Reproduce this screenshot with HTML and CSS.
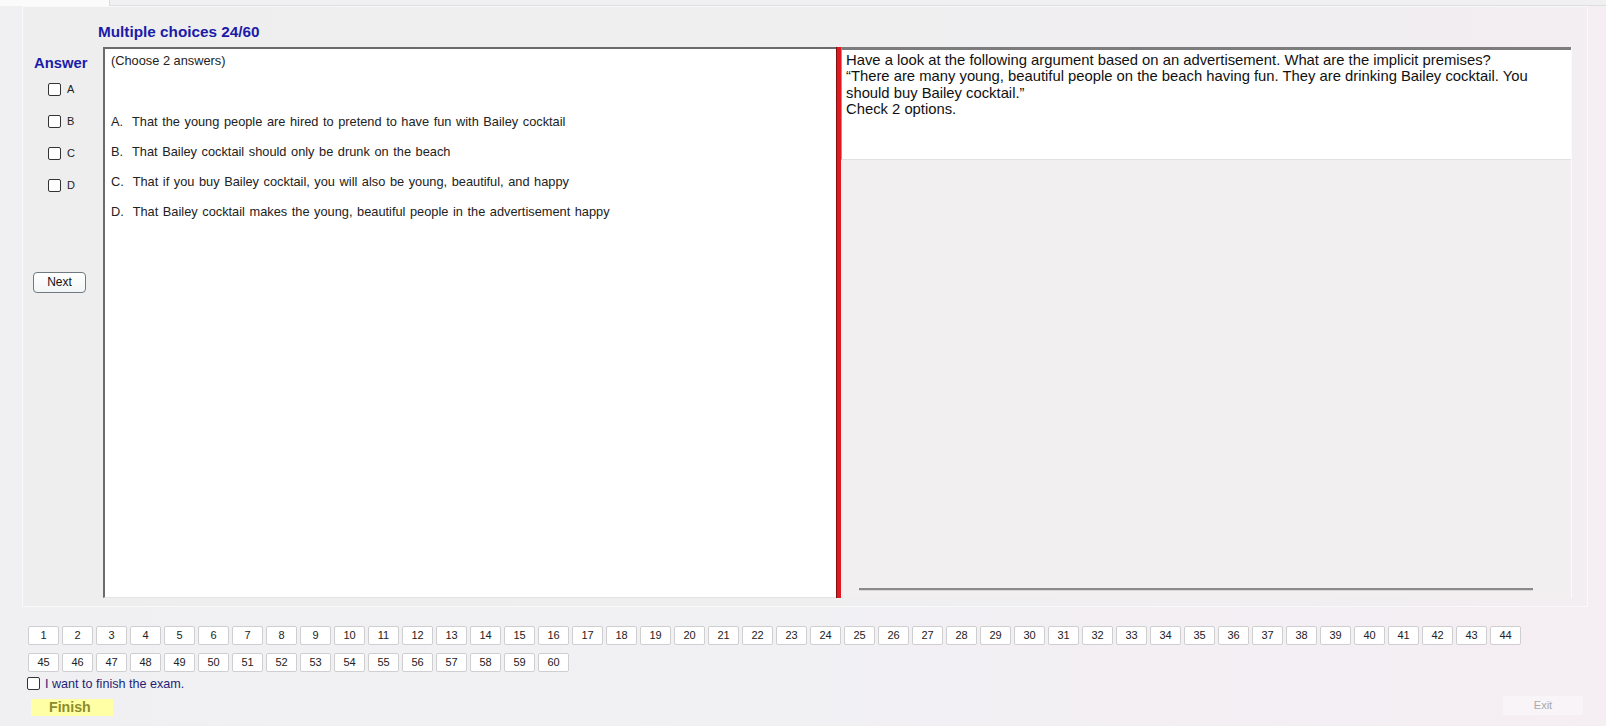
FILE: index.html
```html
<!DOCTYPE html>
<html>
<head>
<meta charset="utf-8">
<link rel="stylesheet" href="styles.css">
</head>
<body>
<div class="tabstrip"><div class="tab"></div><div class="tabline"></div></div>
<div class="frame">
  <div class="title">Multiple choices 24/60</div>
  <div class="content">
    <div class="leftcol">
      <div class="answer">Answer</div>
      <div class="opt"><span class="cb"></span><span class="lbl">A</span></div>
      <div class="opt"><span class="cb"></span><span class="lbl">B</span></div>
      <div class="opt"><span class="cb"></span><span class="lbl">C</span></div>
      <div class="opt"><span class="cb"></span><span class="lbl">D</span></div>
      <div class="next">Next</div>
    </div>
    <div class="mainbox">
      <div class="choose">(Choose 2 answers)</div>
      <div class="choices">
        <div class="choice">A.&nbsp; That the young people are hired to pretend to have fun with Bailey cocktail</div>
        <div class="choice">B.&nbsp; That Bailey cocktail should only be drunk on the beach</div>
        <div class="choice">C.&nbsp; That if you buy Bailey cocktail, you will also be young, beautiful, and happy</div>
        <div class="choice">D.&nbsp; That Bailey cocktail makes the young, beautiful people in the advertisement happy</div>
      </div>
    </div>
    <div class="splitter"></div>
    <div class="rightpanel">
      <div class="question">Have a look at the following argument based on an advertisement. What are the implicit premises?<br>“There are many young, beautiful people on the beach having fun. They are drinking Bailey cocktail. You should buy Bailey cocktail.”<br>Check 2 options.</div>
      <div class="hline"></div>
    </div>
  </div>
</div>
<div class="bottom">
  <div class="numrow">
    <span class="num">1</span><span class="num">2</span><span class="num">3</span><span class="num">4</span><span class="num">5</span><span class="num">6</span><span class="num">7</span><span class="num">8</span><span class="num">9</span><span class="num">10</span><span class="num">11</span><span class="num">12</span><span class="num">13</span><span class="num">14</span><span class="num">15</span><span class="num">16</span><span class="num">17</span><span class="num">18</span><span class="num">19</span><span class="num">20</span><span class="num">21</span><span class="num">22</span><span class="num">23</span><span class="num">24</span><span class="num">25</span><span class="num">26</span><span class="num">27</span><span class="num">28</span><span class="num">29</span><span class="num">30</span><span class="num">31</span><span class="num">32</span><span class="num">33</span><span class="num">34</span><span class="num">35</span><span class="num">36</span><span class="num">37</span><span class="num">38</span><span class="num">39</span><span class="num">40</span><span class="num">41</span><span class="num">42</span><span class="num">43</span><span class="num">44</span>
  </div>
  <div class="numrow">
    <span class="num">45</span><span class="num">46</span><span class="num">47</span><span class="num">48</span><span class="num">49</span><span class="num">50</span><span class="num">51</span><span class="num">52</span><span class="num">53</span><span class="num">54</span><span class="num">55</span><span class="num">56</span><span class="num">57</span><span class="num">58</span><span class="num">59</span><span class="num">60</span>
  </div>
  <div class="finishcheck"><span class="cb"></span><span class="fctext">I want to finish the exam.</span></div>
  <div class="actions">
    <div class="finish">Finish</div>
    <div class="exit">Exit</div>
  </div>
</div>
</body>
</html>
```
FILE: styles.css
```css
html, body {
  margin: 0;
  padding: 0;
}
body {
  width: 1606px;
  height: 726px;
  overflow: hidden;
  background: linear-gradient(to right, #f0f0f2 0%, #f1f0f3 50%, #f5eef3 100%);
  font-family: "Liberation Sans", Arial, sans-serif;
  color: #1a1a1a;
}
.tabstrip {
  display: flex;
  height: 6px;
}
.tab {
  width: 109px;
  height: 6px;
  background: #fbfbfb;
  border-right: 1px solid #dcdcdc;
}
.tabline {
  flex: 1;
  height: 5px;
  border-bottom: 1px solid #dedede;
  background: #f0f0f2;
}
.frame {
  margin-left: 22px;
  width: 1564px;
  height: 599px;
  border: 1px solid #f9f9fb;
  background: linear-gradient(to right, #eeeeef 0%, #efeff0 50%, #f2eef1 100%);
}
.title {
  height: 40px;
  box-sizing: border-box;
  padding-top: 17px;
  padding-left: 75px;
  font-size: 15.3px;
  line-height: 16px;
  font-weight: bold;
  color: #1b1ba8;
}
.content {
  display: flex;
  height: 551px;
}
.leftcol {
  width: 80px;
  display: flex;
  flex-direction: column;
  padding-top: 8px;
  box-sizing: border-box;
}
.answer {
  padding-left: 11px;
  font-size: 14.8px;
  line-height: 16px;
  font-weight: bold;
  color: #1b1ba8;
  margin-bottom: 2px;
}
.opt {
  height: 32px;
  display: flex;
  align-items: center;
  padding-left: 25px;
}
.cb {
  display: inline-block;
  width: 11px;
  height: 11px;
  border: 1px solid #333;
  border-radius: 2px;
  background: #fff;
}
.lbl {
  margin-left: 6px;
  font-size: 11px;
  color: #222;
}
.next {
  margin-top: 71px;
  margin-left: 10px;
  width: 53px;
  height: 21px;
  box-sizing: border-box;
  border: 1px solid #6e7a80;
  border-radius: 4px;
  background: linear-gradient(#ffffff, #f2f6f7);
  font-size: 12px;
  line-height: 19px;
  text-align: center;
  color: #111;
}
.mainbox {
  width: 733px;
  box-sizing: border-box;
  background: #ffffff;
  border-left: 2px solid #6b6b6b;
  border-top: 2px solid #6b6b6b;
  border-bottom: 1px solid #e4e4e4;
  padding: 5px 0 0 6px;
  font-size: 12.8px;
  color: #222;
}
.choose {
  line-height: 14px;
}
.choices {
  margin-top: 39px;
}
.choice {
  line-height: 30px;
  word-spacing: 1px;
}
.splitter {
  width: 4px;
  background: #e11820;
  border-left: 1px solid #7a1010;
}
.rightpanel {
  width: 731px;
  display: flex;
  flex-direction: column;
  background: #f2eff1;
  border-right: 1px solid #fbfbfb;
  box-sizing: border-box;
}
.question {
  height: 113px;
  box-sizing: border-box;
  background: #ffffff;
  border-top: 3px solid #7c7c7c;
  border-left: 1px solid #9a9a9a;
  border-bottom: 1px solid #e2e2e2;
  padding: 2px 4px 0 4px;
  font-size: 14.8px;
  line-height: 16.4px;
  color: #111;
}
.hline {
  margin-top: auto;
  margin-bottom: 7px;
  margin-left: 18px;
  width: 674px;
  height: 2px;
  background: #8a8a8a;
  border-bottom: 1px solid #d8d8d8;
}
.bottom {
  padding-left: 28px;
  padding-top: 19px;
}
.numrow {
  display: flex;
  gap: 3px;
  height: 19px;
  margin-bottom: 8px;
}
.num {
  width: 31px;
  height: 19px;
  box-sizing: border-box;
  border: 1px solid #cfcfd2;
  border-radius: 2px;
  background: #ffffff;
  font-size: 11px;
  line-height: 17px;
  text-align: center;
  color: #222;
}
.finishcheck {
  display: flex;
  align-items: center;
  height: 15px;
  margin-top: -4px;
  margin-left: -1px;
}
.fctext {
  margin-left: 5px;
  font-size: 12.6px;
  color: #1e1e78;
}
.actions {
  display: flex;
  justify-content: space-between;
  margin-top: 5px;
  width: 1555px;
}
.finish {
  margin-left: 3px;
  width: 82px;
  height: 17px;
  margin-top: 3px;
  box-sizing: border-box;
  padding-left: 18px;
  background: #ffffa6;
  font-size: 14.2px;
  line-height: 17px;
  font-weight: bold;
  color: #8c8c2c;
}
.exit {
  width: 80px;
  height: 19px;
  background: #f8f4f8;
  font-size: 11px;
  line-height: 19px;
  text-align: center;
  color: #aaaaaa;
}
```
